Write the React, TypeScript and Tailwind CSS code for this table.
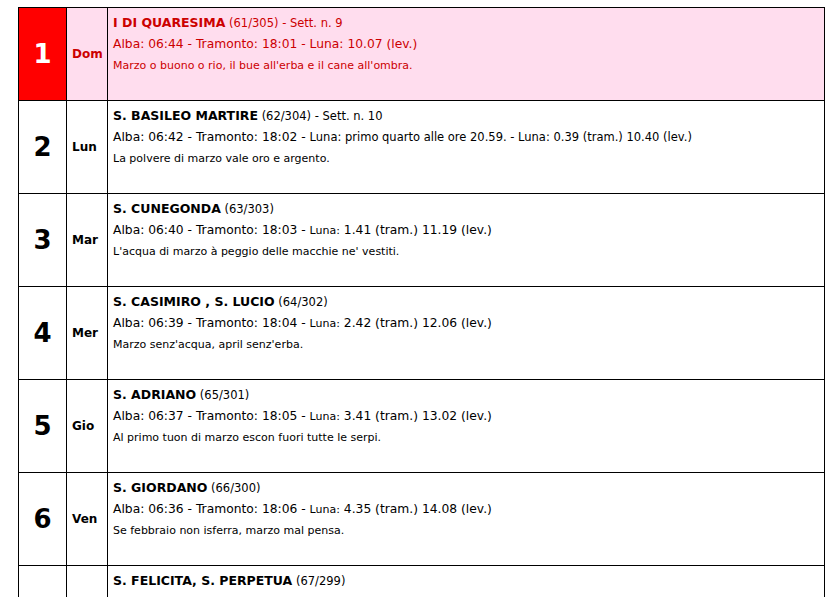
import React from 'react';

type Day = {
  n: number;
  day: string;
  saint: string;
  info: string;
  alba: string;
  luna: React.ReactNode;
  saying: string;
  sunday?: boolean;
};

const Small = ({ children }: { children: React.ReactNode }) => (
  <span className="text-[11px]">{children}</span>
);

const days: Day[] = [
  {
    n: 1,
    day: 'Dom',
    saint: 'I DI QUARESIMA',
    info: '(61/305) - Sett. n. 9',
    alba: 'Alba: 06:44 - Tramonto: 18:01 - ',
    luna: 'Luna: 10.07 (lev.)',
    saying: "Marzo o buono o rio, il bue all'erba e il cane all'ombra.",
    sunday: true,
  },
  {
    n: 2,
    day: 'Lun',
    saint: 'S. BASILEO MARTIRE',
    info: '(62/304) - Sett. n. 10',
    alba: 'Alba: 06:42 - Tramonto: 18:02 - ',
    luna: (
      <span className="text-[11.5px]">
        Luna: primo quarto alle ore 20.59. - Luna: 0.39 (tram.) 10.40 (lev.)
      </span>
    ),
    saying: 'La polvere di marzo vale oro e argento.',
  },
  {
    n: 3,
    day: 'Mar',
    saint: 'S. CUNEGONDA',
    info: '(63/303)',
    alba: 'Alba: 06:40 - Tramonto: 18:03 - ',
    luna: (
      <>
        <Small>Luna:</Small> 1.41 (tram.) 11.19 (lev.)
      </>
    ),
    saying: "L'acqua di marzo à peggio delle macchie ne' vestiti.",
  },
  {
    n: 4,
    day: 'Mer',
    saint: 'S. CASIMIRO , S. LUCIO',
    info: '(64/302)',
    alba: 'Alba: 06:39 - Tramonto: 18:04 - ',
    luna: (
      <>
        <Small>Luna:</Small> 2.42 (tram.) 12.06 (lev.)
      </>
    ),
    saying: "Marzo senz'acqua, april senz'erba.",
  },
  {
    n: 5,
    day: 'Gio',
    saint: 'S. ADRIANO',
    info: '(65/301)',
    alba: 'Alba: 06:37 - Tramonto: 18:05 - ',
    luna: (
      <>
        <Small>Luna:</Small> 3.41 (tram.) 13.02 (lev.)
      </>
    ),
    saying: 'Al primo tuon di marzo escon fuori tutte le serpi.',
  },
  {
    n: 6,
    day: 'Ven',
    saint: 'S. GIORDANO',
    info: '(66/300)',
    alba: 'Alba: 06:36 - Tramonto: 18:06 - ',
    luna: (
      <>
        <Small>Luna:</Small> 4.35 (tram.) 14.08 (lev.)
      </>
    ),
    saying: 'Se febbraio non isferra, marzo mal pensa.',
  },
  {
    n: 7,
    day: 'Sab',
    saint: 'S. FELICITA, S. PERPETUA',
    info: '(67/299)',
    alba: 'Alba: 06:34 - Tramonto: 18:07 - ',
    luna: (
      <>
        <Small>Luna:</Small> 5.25 (tram.) 15.15 (lev.)
      </>
    ),
    saying: 'Marzo molle, grano per le zolle.',
  },
];

const App: React.FC = () => {
  return (
    <div className="bg-white min-h-screen pl-[18px] pt-[7px] font-['DejaVu_Sans',Verdana,sans-serif]">
      <table className="w-[807px] border-collapse border border-black">
        <tbody>
          {days.map((d) => (
            <tr key={d.n} className={d.sunday ? 'bg-[#ffddee] text-[#cc0000]' : 'bg-white text-black'}>
              <td
                className={`w-[48px] h-[93px] border border-black text-center align-middle text-[26px] font-bold ${
                  d.sunday ? 'bg-[#ff0000] text-white' : ''
                }`}
              >
                {d.n}
              </td>
              <td className="w-[41px] border border-black pl-[5px] align-middle text-[12px] font-bold">
                {d.day}
              </td>
              <td className="border border-black align-top pl-[5px] pt-[4px]">
                <div className="leading-[21px] text-[11.5px]">
                  <span className="text-[12.5px] font-bold">{d.saint}</span> {d.info}
                </div>
                <div className="leading-[21px] text-[12.3px]">
                  {d.alba}
                  {d.luna}
                </div>
                <div className="leading-[21px] text-[11px]">{d.saying}</div>
              </td>
            </tr>
          ))}
        </tbody>
      </table>
    </div>
  );
};

export default App;
